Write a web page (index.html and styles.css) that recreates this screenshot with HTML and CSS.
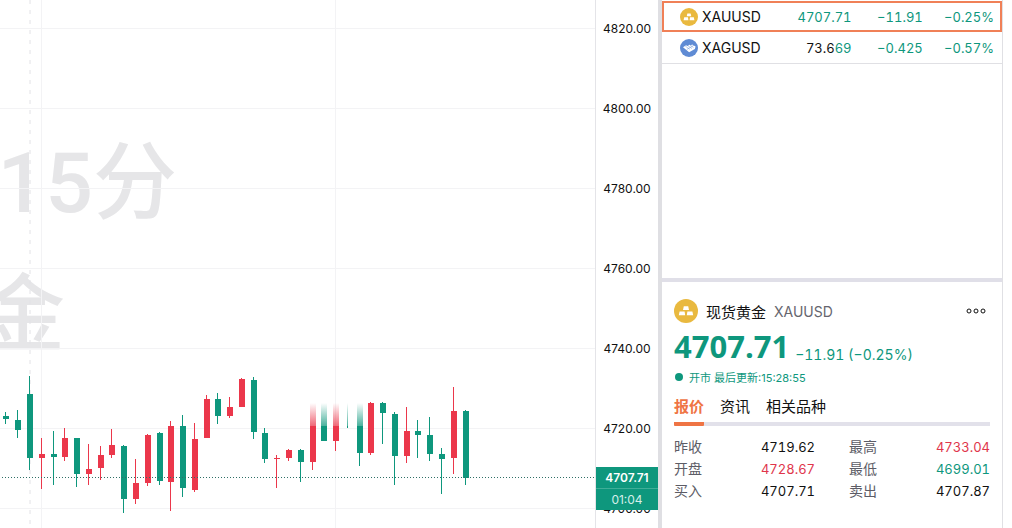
FILE: index.html
```
<!DOCTYPE html>
<html lang="zh-CN">
<head>
    <meta charset="utf-8">
    <title>XAUUSD 4707.71</title>
    <link rel="stylesheet" href="styles.css">
</head>
<body>
    <svg class="symbols" aria-hidden="true">
        <symbol id="gold" viewBox="0 0 24 24">
            <circle cx="12" cy="12" r="12" fill="#e9b93f"/>
            <path fill="#fff" d="M9.8 7.2h4.4l.8 3.8H9zM5.6 12.4h5l.6 3.8H4.8zM13.4 12.4h5l.8 3.8h-6.4z"/>
        </symbol>
        <symbol id="silver" viewBox="0 0 24 24">
            <circle cx="12" cy="12" r="12" fill="#5f8bd4"/>
            <path fill="#fff" d="M4 11l4-2.6 2 .8 2.6-1.6 2 .8 1.6-1 4.6 2.6-1 3.4-7.6 4.4z"/>
            <path fill="none" stroke="#5f8bd4" stroke-width=".6" d="M7 9.4l6 4.4M10 8.6l6 4.2M13.4 8l4.6 3.4M9 14l5-3 5-3"/>
        </symbol>
    </svg>

    <div class="terminal">
        <main class="chart">
            <svg id="plot" class="plot">
                <defs>
                    <linearGradient id="fade-up" gradientUnits="userSpaceOnUse" x1="0" y1="403" x2="0" y2="426">
                        <stop offset="0" stop-color="#eb374b" stop-opacity="0"/>
                        <stop offset="1" stop-color="#eb374b" stop-opacity=".75"/>
                    </linearGradient>
                    <linearGradient id="fade-down" gradientUnits="userSpaceOnUse" x1="0" y1="403" x2="0" y2="426">
                        <stop offset="0" stop-color="#0e977d" stop-opacity="0"/>
                        <stop offset="1" stop-color="#0e977d" stop-opacity=".75"/>
                    </linearGradient>
                </defs>
                <text class="watermark" x="177" y="212">15分</text>
                <text class="watermark" x="65" y="344">金</text>
                <g id="grid" class="grid"></g>
                <line class="session" x1="30" y1="0" x2="30" y2="100%"/>
                <g id="candles"></g>
                <line class="last-price" x1="2" y1="477.5" x2="100%" y2="477.5"/>
            </svg>
        </main>

        <div class="axis">
            <div class="tick">4820.00</div>
            <div class="tick">4800.00</div>
            <div class="tick">4780.00</div>
            <div class="tick">4760.00</div>
            <div class="tick">4740.00</div>
            <div class="tick">4720.00</div>
            <div class="tick">4700.00</div>
            <div class="tag">
                <div class="tag-price">4707.71</div>
                <div class="tag-time">01:04</div>
            </div>
        </div>

        <aside class="side">
            <section class="watchlist">
                <table class="quotes">
                    <tr class="active">
                        <th scope="row"><span class="symbol"><svg class="coin"><use href="#gold"/></svg>XAUUSD</span></th>
                        <td class="down">4707.71</td>
                        <td class="down">−11.91</td>
                        <td class="down">−0.25%</td>
                    </tr>
                    <tr>
                        <th scope="row"><span class="symbol"><svg class="coin"><use href="#silver"/></svg>XAGUSD</span></th>
                        <td>73.6<span class="down">69</span></td>
                        <td class="down">−0.425</td>
                        <td class="down">−0.57%</td>
                    </tr>
                </table>
            </section>

            <section class="detail">
                <header class="detail-head">
                    <svg class="coin coin-large"><use href="#gold"/></svg>
                    <h2 class="name">现货黄金</h2>
                    <span class="code">XAUUSD</span>
                    <button class="more" type="button" aria-label="更多">
                        <svg width="20" height="6" viewBox="0 0 20 6" fill="none" stroke="#111">
                            <circle cx="3" cy="3" r="2"/>
                            <circle cx="10" cy="3" r="2"/>
                            <circle cx="17" cy="3" r="2"/>
                        </svg>
                    </button>
                </header>
                <div class="price-line down">
                    <strong class="price">4707.71</strong>
                    <span class="change">−11.91 (−0.25%)</span>
                </div>
                <div class="status down"><i class="dot"></i>开市 最后更新:15:28:55</div>
                <nav class="tabs">
                    <button class="tab selected" type="button">报价</button>
                    <button class="tab" type="button">资讯</button>
                    <button class="tab" type="button">相关品种</button>
                </nav>
                <dl class="stats">
                    <div class="stat"><dt>昨收</dt><dd>4719.62</dd></div>
                    <div class="stat"><dt>最高</dt><dd class="up">4733.04</dd></div>
                    <div class="stat"><dt>开盘</dt><dd class="up">4728.67</dd></div>
                    <div class="stat"><dt>最低</dt><dd class="down">4699.01</dd></div>
                    <div class="stat"><dt>买入</dt><dd>4707.71</dd></div>
                    <div class="stat"><dt>卖出</dt><dd>4707.87</dd></div>
                </dl>
            </section>
        </aside>
    </div>
    <script src="chart.js"></script>
</body>
</html>
```
FILE: styles.css
```
body {
    margin: 0;
    background: #fff;
    color: #111;
    font-family: Inter, "Noto Sans CJK SC", sans-serif;
    font-size: 14px;
}

.symbols {
    display: none;
}

.terminal {
    display: flex;
    height: 100vh;
    padding-right: 9px;
    overflow: hidden;
}

.up {
    color: #e0354b;
}

.down {
    color: #0e977d;
}

/* chart */
.chart {
    flex: 1;
    min-width: 0;
}

.plot {
    display: block;
    width: 100%;
    height: 100%;
}

.watermark {
    fill: #e6e6e8;
    font-family: Roboto, "Noto Sans CJK SC", sans-serif;
    font-size: 84px;
    font-weight: 500;
    text-anchor: end;
}

.grid {
    stroke: #f3f3f5;
}

.session {
    stroke: #e2e2e6;
    stroke-dasharray: 4 6;
}

.last-price {
    stroke: #2f6f66;
    stroke-dasharray: 1 2;
}

/* price axis */
.axis {
    position: relative;
    flex: none;
    width: 62px;
    overflow: hidden;
    border-left: 1px solid #e4e4e8;
    border-right: 4px solid #dfdfe3;
    font-size: 12px;
    text-align: center;
}

.tick {
    height: 80px;
    line-height: 80px;
}

.tick:first-child {
    margin-top: -11px;
}

.tag {
    position: absolute;
    top: 467px;
    left: 0;
    right: 0;
    background: #0e977d;
    color: #fff;
    line-height: 21px;
}

.tag-price {
    border-bottom: 1px solid #3fae98;
    font-weight: 600;
}

.tag-time {
    color: #d5efea;
}

/* right column */
.side {
    display: flex;
    flex-direction: column;
    flex: none;
    width: 340px;
    border-right: 1px solid #e0e0e4;
}

.watchlist {
    height: 277px;
    padding-top: 1px;
    border-bottom: 4px solid #e0dfe8;
}

.quotes {
    width: 100%;
    table-layout: fixed;
    border-collapse: collapse;
    border-bottom: 1px solid #e0e0e4;
}

.quotes th,
.quotes td {
    width: 71px;
    height: 31px;
    padding: 0;
    font-weight: 400;
    text-align: right;
}

.quotes th {
    width: 100px;
    padding-left: 18px;
}

.quotes td,
.stat dd {
    font-size: 13px;
    font-variant-numeric: tabular-nums;
}

.quotes td:last-child {
    padding-right: 8px;
}

.quotes .active {
    outline: 2px solid #f08057;
    outline-offset: -2px;
}

.symbol {
    display: flex;
    align-items: center;
    gap: 4px;
}

.coin {
    width: 18px;
    height: 18px;
}

.coin-large {
    width: 24px;
    height: 24px;
}

.detail {
    padding: 16px 12px 0;
}

.detail-head {
    display: flex;
    align-items: center;
    height: 26px;
}

.name {
    margin: 0 8px;
    font-size: 15px;
    font-weight: 400;
}

.code {
    color: #66666e;
}

.more {
    display: flex;
    margin-left: auto;
    padding: 4px;
    border: 0;
    background: none;
}

.price-line {
    display: flex;
    align-items: center;
    gap: 6px;
    height: 44px;
}

.price {
    font-family: "Open Sans", sans-serif;
    font-size: 31px;
    font-weight: 700;
}

.change {
    padding-top: 16px;
    font-variant-numeric: tabular-nums;
}

.status {
    display: flex;
    align-items: center;
    gap: 6px;
    height: 18px;
    font-size: 11px;
}

.dot {
    width: 8px;
    height: 8px;
    margin-left: 1px;
    border-radius: 50%;
    background: #0e977d;
}

.tabs {
    display: flex;
    gap: 16px;
    margin-top: 8px;
    background: linear-gradient(#e2e1ea, #e2e1ea) bottom / 100% 4px no-repeat;
}

.tab {
    height: 32px;
    padding: 0 0 6px;
    border: 0;
    border-bottom: 4px solid transparent;
    background: none;
    color: #111;
    font: inherit;
    font-size: 15px;
}

.tab.selected {
    border-color: #ef7444;
    border-radius: 1px;
    color: #ef7444;
    font-weight: 700;
}

.stats {
    display: grid;
    grid-template-columns: 1fr 1fr;
    column-gap: 34px;
    margin: 10px 0 0;
    line-height: 22px;
}

.stat {
    display: flex;
    justify-content: space-between;
}

.stat dt {
    color: #5c5c66;
}

.stat dd {
    margin: 0;
}
```
FILE: chart.js
```
const UP = '#eb374b';
const DOWN = '#0e977d';

// x, wick top, wick bottom, body top, body bottom, direction, fade width
const candles = [
  [6, 412, 424, 416, 419, 'd'],
  [18, 410, 438, 420, 430, 'd'],
  [30, 376, 470, 394, 458, 'd'],
  [42, 438, 489, 454, 458, 'u'],
  [54, 431, 485, 454, 457, 'd'],
  [65, 428, 461, 438, 457, 'u'],
  [77, 438, 487, 438, 474, 'd'],
  [89, 444, 485, 469, 474, 'u'],
  [101, 446, 480, 455, 468, 'u'],
  [112, 429, 458, 445, 455, 'u'],
  [124, 445, 513, 446, 499, 'd'],
  [136, 459, 504, 483, 499, 'u'],
  [148, 434, 486, 435, 483, 'u'],
  [160, 432, 485, 433, 481, 'd'],
  [171, 421, 511, 426, 482, 'u'],
  [183, 415, 497, 426, 488, 'd'],
  [195, 423, 492, 439, 490, 'u'],
  [207, 395, 438, 399, 438, 'u'],
  [218, 393, 424, 399, 416, 'd'],
  [230, 397, 418, 407, 416, 'u'],
  [242, 378, 407, 379, 407, 'u'],
  [254, 377, 439, 380, 432, 'd'],
  [265, 428, 463, 433, 459, 'd'],
  [277, 455, 488, 458, 459, 'u'],
  [289, 449, 461, 450, 458, 'u'],
  [301, 449, 482, 450, 462, 'd'],
  [313, 426, 470, 426, 462, 'u', 6],
  [324, 426, 441, 426, 441, 'd', 6],
  [336, 426, 451, 426, 441, 'u', 6],
  [348, 426, 428, 426, 426, 'd', 1],
  [360, 426, 466, 426, 453, 'd', 6],
  [371, 402, 455, 403, 453, 'u'],
  [383, 402, 444, 403, 413, 'd'],
  [395, 412, 485, 414, 456, 'd'],
  [407, 407, 463, 431, 456, 'u'],
  [418, 420, 458, 431, 435, 'd'],
  [430, 417, 461, 435, 454, 'd'],
  [442, 448, 494, 454, 459, 'd'],
  [454, 387, 474, 411, 458, 'u'],
  [466, 410, 485, 411, 478, 'd']
];

function add(parent, name, attrs) {
  const el = document.createElementNS('http://www.w3.org/2000/svg', name);
  for (const key in attrs) el.setAttribute(key, attrs[key]);
  parent.appendChild(el);
}

const grid = document.getElementById('grid');
for (let y = 28.5; y < 1000; y += 80) {
  add(grid, 'line', { x1: 0, x2: '100%', y1: y, y2: y });
}
[41.5, 335.5].forEach(x => add(grid, 'line', { x1: x, x2: x, y1: 0, y2: '100%' }));

const layer = document.getElementById('candles');
candles.forEach(([x, high, low, top, bottom, dir, fade]) => {
  const fill = dir === 'u' ? UP : DOWN;
  add(layer, 'rect', { x: x - 1, y: high, width: 1, height: low - high, fill });
  add(layer, 'rect', { x: x - 3, y: top, width: 6, height: bottom - top, fill });
  if (fade) {
    const id = dir === 'u' ? 'fade-up' : 'fade-down';
    add(layer, 'rect', { x: x - Math.ceil(fade / 2), y: 403, width: fade, height: 23, fill: `url(#${id})` });
  }
});
```
